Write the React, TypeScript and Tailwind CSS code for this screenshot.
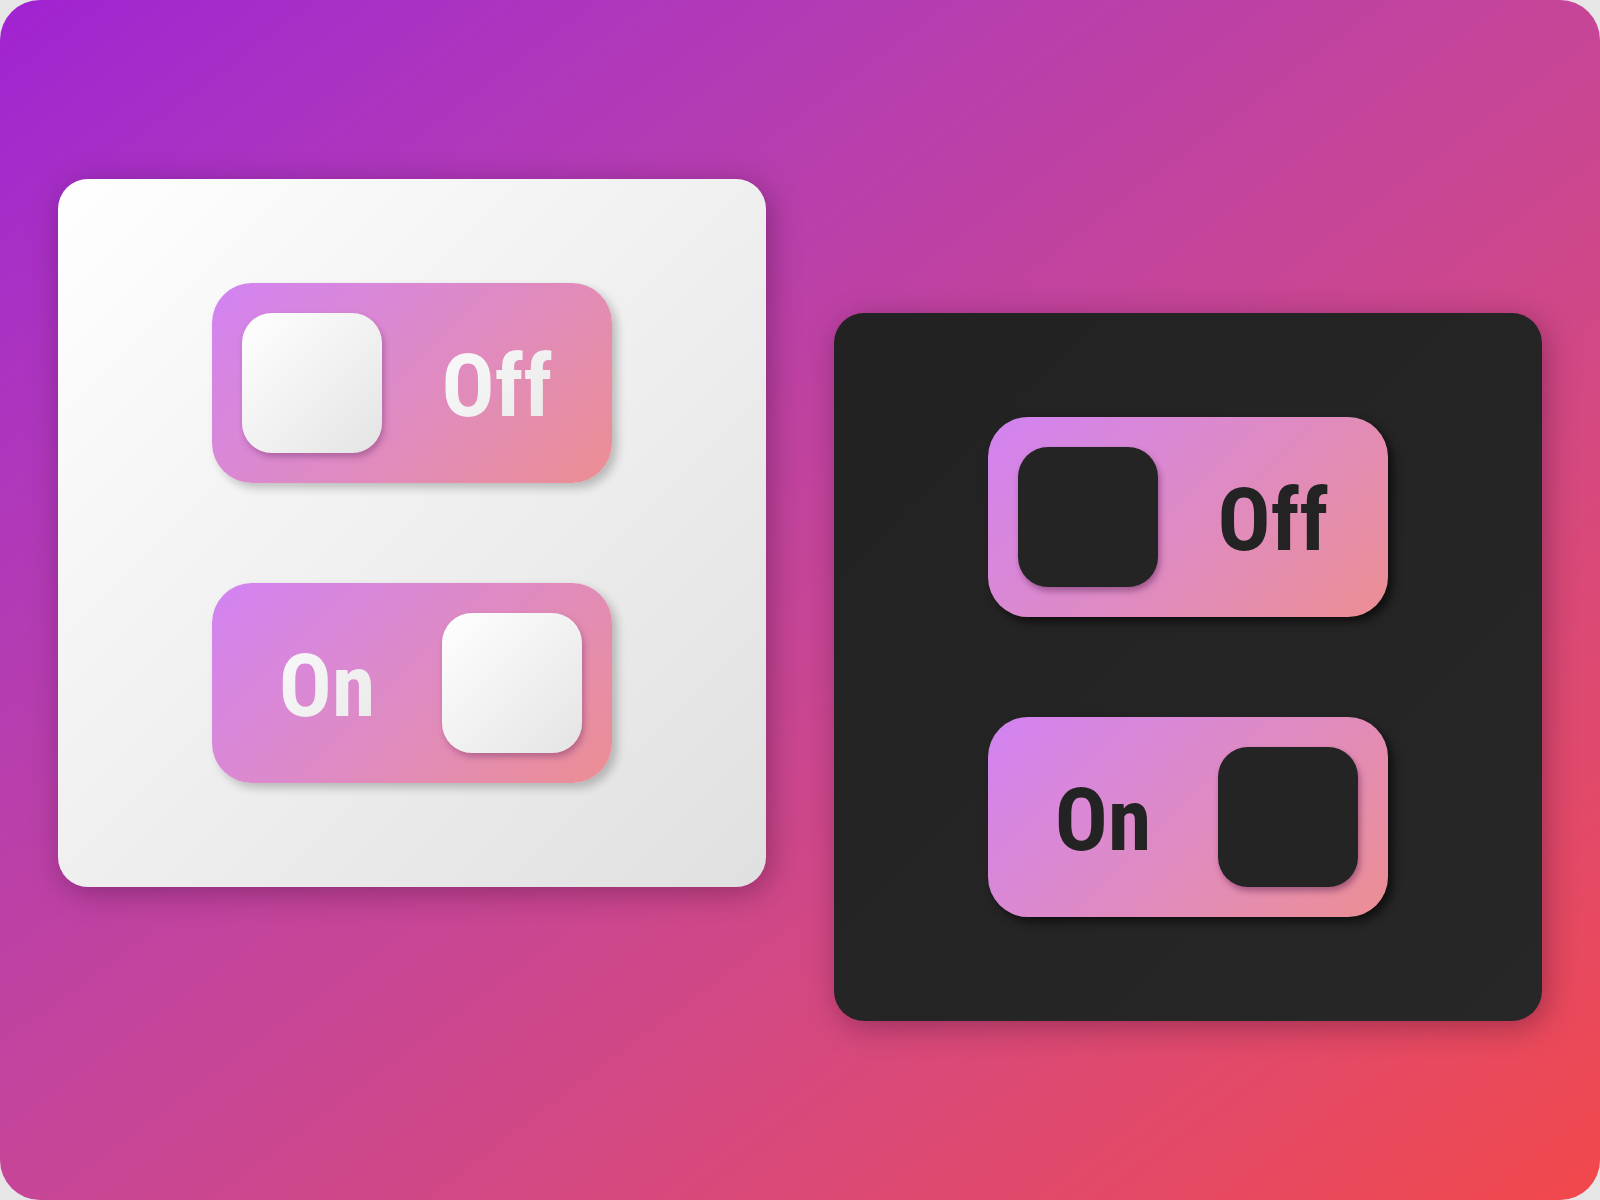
import React from 'react';

type Theme = 'light' | 'dark';

function Toggle({ on, theme }: { on: boolean; theme: Theme }) {
  const knob =
    theme === 'light'
      ? 'bg-linear-135 from-white to-[#e4e4e4] shadow-[2px_4px_6px_rgba(90,30,90,0.35)]'
      : 'bg-[#242424] shadow-[2px_4px_6px_rgba(60,10,60,0.4)]';
  const label =
    theme === 'light'
      ? 'bg-linear-135 from-white to-[#e4e4e4] bg-clip-text text-transparent'
      : 'text-[#232323]';
  const shadow =
    theme === 'light'
      ? 'shadow-[5px_5px_10px_rgba(0,0,0,0.22)]'
      : 'shadow-[5px_5px_10px_rgba(0,0,0,0.6)]';

  const text = (
    <span
      className={`mt-[6px] flex-1 text-center text-[88px] leading-none font-bold font-stretch-condensed ${label}`}
      style={{ fontFamily: 'Roboto, "Liberation Sans", sans-serif' }}
    >
      {on ? 'On' : 'Off'}
    </span>
  );

  return (
    <div
      className={`flex h-[200px] w-[400px] items-center rounded-[40px] bg-linear-135 from-[#d282f2] to-[#ec8e92] ${shadow}`}
    >
      {on ? text : null}
      <div className={`h-[140px] w-[140px] rounded-[30px] ${knob} ${on ? 'mr-[30px]' : 'ml-[30px]'}`} />
      {on ? null : text}
    </div>
  );
}

function Card({ theme, className }: { theme: Theme; className: string }) {
  const bg =
    theme === 'light'
      ? 'bg-linear-135 from-white to-[#e0e0e0]'
      : 'bg-linear-135 from-[#222222] to-[#272727]';
  return (
    <div
      className={`flex h-[708px] w-[708px] flex-col items-center justify-center gap-[100px] rounded-[30px] shadow-[4px_6px_30px_rgba(40,0,40,0.35)] ${bg} ${className}`}
    >
      <Toggle on={false} theme={theme} />
      <Toggle on={true} theme={theme} />
    </div>
  );
}

export default function App() {
  return (
    <div className="h-[1200px] w-[1600px] bg-[#e6e6e6]">
      <div className="flex h-full w-full items-start gap-[68px] rounded-[40px] bg-linear-to-br from-[#a022d2] to-[#f1484a] px-[58px]">
        <Card theme="light" className="mt-[179px]" />
        <Card theme="dark" className="mt-[313px]" />
      </div>
    </div>
  );
}
